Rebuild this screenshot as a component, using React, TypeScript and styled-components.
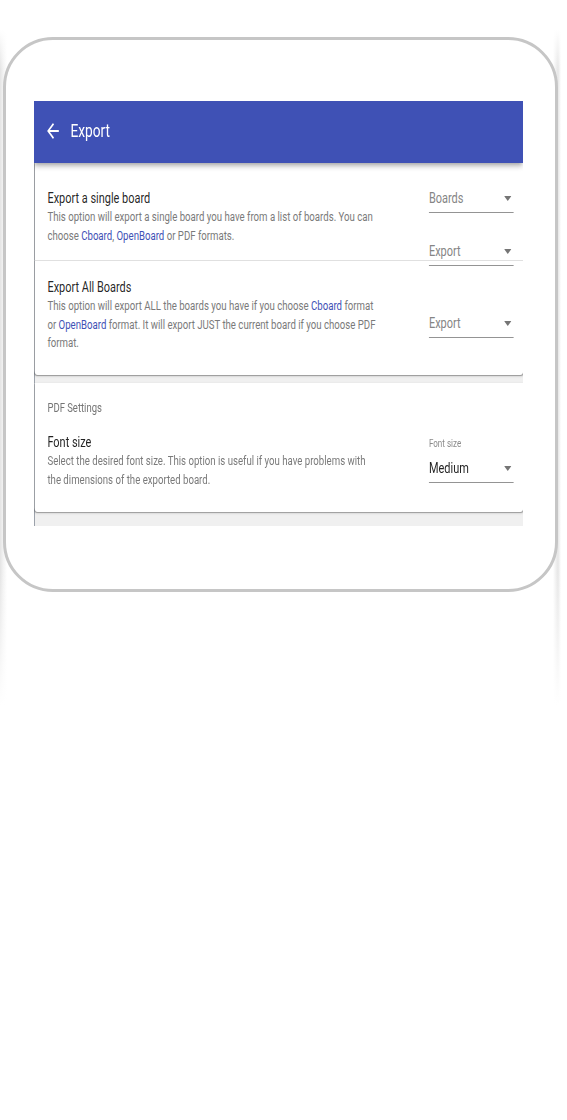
import React from 'react';
import styled, { createGlobalStyle } from 'styled-components';

const GlobalStyle = createGlobalStyle`
  html, body { margin: 0; padding: 0; background: #fff; }
  body { font-family: Roboto, "Liberation Sans", Arial, sans-serif; }
`;

const Stage = styled.div`
  width: 567px;
  min-height: 1120px;
  padding: 37px 0 0 3px;
  box-sizing: border-box;
  background-image:
    linear-gradient(to bottom, #fff 30px, rgba(255,255,255,0) 70px, rgba(255,255,255,0) 570px, #fff 705px),
    linear-gradient(to right, #e4e4e4 0px, #f2f2f2 3px, #fff 7px, #fff 553px, #efefef 556px, #e6e6e6 558px, #fff 561px);
  background-repeat: no-repeat;
  background-size: 100% 720px;
`;

const Frame = styled.div`
  width: 555px;
  height: 555px;
  box-sizing: border-box;
  border: 3px solid #c6c6c6;
  border-radius: 50px;
  padding: 61px 32px 63px 28px;
  background: #fff;
`;

const Screen = styled.div`
  width: 489px;
  height: 425px;
  overflow: hidden;
`;

/* The captured app screen is horizontally compressed; the canvas is laid out
   at its natural width and squeezed to fit the screen. */
const Canvas = styled.div`
  width: 670px;
  height: 425px;
  display: flex;
  flex-direction: column;
  transform: scaleX(0.73);
  transform-origin: 0 0;
`;

const AppBar = styled.header`
  position: relative;
  z-index: 1;
  flex: 0 0 62px;
  display: flex;
  align-items: center;
  gap: 12px;
  padding: 0 0 2px 14px;
  box-sizing: border-box;
  background: #3f51b5;
  color: #fff;
  box-shadow: 0 2px 4px -1px rgba(0, 0, 0, 0.2), 0 4px 5px 0 rgba(0, 0, 0, 0.14),
    0 1px 10px 0 rgba(0, 0, 0, 0.12);
`;

const BackIcon = styled.svg`
  width: 24px;
  height: 24px;
  fill: #fff;
  flex: 0 0 24px;
`;

const AppTitle = styled.h1`
  margin: 0;
  font-size: 18.8px;
  font-weight: 400;
  line-height: 24px;
`;

const Body = styled.main`
  flex: 1;
  display: flex;
  flex-direction: column;
  background: #f0f0f0;
  border-left: 1.37px solid #7d8592;
`;

const Card = styled.section<{ $gap: number }>`
  background: #fff;
  border-radius: 0 0 4px 4px;
  box-shadow: 0 1px 3px rgba(0, 0, 0, 0.2), 0 1px 1px rgba(0, 0, 0, 0.14),
    0 2px 1px -1px rgba(0, 0, 0, 0.12);
  margin-bottom: ${(p) => p.$gap}px;
`;

const Row = styled.div<{ $h?: number; $pb: number; $divider?: boolean }>`
  display: flex;
  align-items: flex-start;
  box-sizing: border-box;
  height: ${(p) => (p.$h ? `${p.$h}px` : 'auto')};
  padding: 0 13px ${(p) => p.$pb}px 17.4px;
  border-top: ${(p) => (p.$divider ? '1px solid #e0e0e0' : 'none')};
`;

const TextCol = styled.div<{ $pt: number }>`
  flex: 1;
  padding-top: ${(p) => p.$pt}px;
  white-space: nowrap;
`;

const Controls = styled.div<{ $pt: number }>`
  flex: 0 0 116px;
  display: flex;
  flex-direction: column;
  gap: 24px;
  padding-top: ${(p) => p.$pt}px;
`;

const Title = styled.div`
  font-size: 15px;
  line-height: 20px;
  color: rgba(0, 0, 0, 0.87);
`;

const Desc = styled.div`
  font-size: 13.2px;
  line-height: 18.5px;
  color: #7a7a7a;
`;

const Link = styled.span`
  color: #3f51b5;
`;

const Subheader = styled.div`
  padding: 17px 17.4px 0;
  font-size: 13px;
  line-height: 16px;
  color: #757575;
`;

const Field = styled.div`
  display: flex;
  flex-direction: column;
  gap: 4px;
`;

const FieldLabel = styled.label`
  font-size: 11px;
  line-height: 12px;
  color: #8a8a8a;
`;

const SelectBox = styled.div<{ $filled?: boolean }>`
  display: flex;
  align-items: center;
  justify-content: space-between;
  height: 28px;
  border-bottom: 1px solid #949494;
  font-size: 15px;
  color: ${(p) => (p.$filled ? 'rgba(0, 0, 0, 0.87)' : '#858585')};
`;

const SelectValue = styled.span`
  line-height: 24px;
  padding-bottom: 1px;
`;

const Caret = styled.svg`
  width: 10px;
  height: 5px;
  margin-right: 3px;
  fill: #757575;
`;

const Select = ({ value, filled }: { value: string; filled?: boolean }) => (
  <SelectBox $filled={filled}>
    <SelectValue>{value}</SelectValue>
    <Caret viewBox="0 0 10 5">
      <polygon points="0,0 10,0 5,5" />
    </Caret>
  </SelectBox>
);

export default function App() {
  return (
    <>
      <GlobalStyle />
      <Stage>
        <Frame>
          <Screen>
            <Canvas>
              <AppBar>
                <BackIcon viewBox="0 0 24 24">
                  <path d="M20 11H7.83l5.59-5.59L12 4l-8 8 8 8 1.41-1.41L7.83 13H20v-2z" />
                </BackIcon>
                <AppTitle>Export</AppTitle>
              </AppBar>
              <Body>
                <Card $gap={8}>
                  <Row $h={97} $pb={0}>
                    <TextCol $pt={25}>
                      <Title>Export a single board</Title>
                      <Desc>
                        This option will export a single board you have from a list of boards. You can
                        <br />
                        choose <Link>Cboard</Link>, <Link>OpenBoard</Link> or PDF formats.
                      </Desc>
                    </TextCol>
                    <Controls $pt={21}>
                      <Select value="Boards" />
                      <Select value="Export" />
                    </Controls>
                  </Row>
                  <Row $divider $pb={22.5}>
                    <TextCol $pt={16}>
                      <Title>Export All Boards</Title>
                      <Desc>
                        This option will export ALL the boards you have if you choose <Link>Cboard</Link> format
                        <br />
                        or <Link>OpenBoard</Link> format. It will export JUST the current board if you choose PDF
                        <br />
                        format.
                      </Desc>
                    </TextCol>
                    <Controls $pt={48}>
                      <Select value="Export" />
                    </Controls>
                  </Row>
                </Card>
                <Card $gap={14}>
                  <Subheader>PDF Settings</Subheader>
                  <Row $pb={23}>
                    <TextCol $pt={16}>
                      <Title>Font size</Title>
                      <Desc>
                        Select the desired font size. This option is useful if you have problems with
                        <br />
                        the dimensions of the exported board.
                      </Desc>
                    </TextCol>
                    <Controls $pt={22}>
                      <Field>
                        <FieldLabel>Font size</FieldLabel>
                        <Select value="Medium" filled />
                      </Field>
                    </Controls>
                  </Row>
                </Card>
              </Body>
            </Canvas>
          </Screen>
        </Frame>
      </Stage>
    </>
  );
}
